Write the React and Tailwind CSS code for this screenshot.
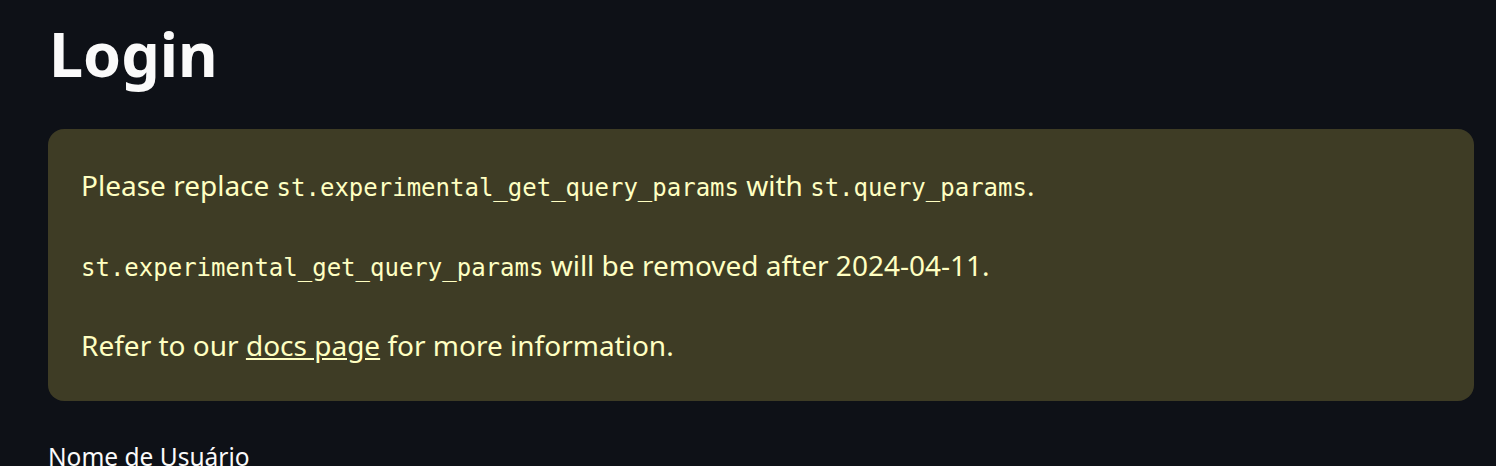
export default function App() {
  const sans = { fontFamily: '"Noto Sans", "Open Sans", sans-serif' };
  const codeCls = "text-[24px] leading-none font-['DejaVu_Sans_Mono',monospace]";
  return (
    <div className="w-[1496px] h-[466px] overflow-hidden bg-[#0e1117] pl-[48px] pr-[22px] pt-[17px]" style={sans}>
      <h1 className="text-[61px] leading-[74px] font-bold text-[#fafafa] mb-[38px] pl-[1px]">Login</h1>
      <div className="rounded-2xl bg-[#3e3c25] px-[33px] py-[32px] text-[#ffffc2] text-[28px] leading-[48px]">
        <p className="mb-[32px]">
          Please replace <code className={codeCls}>st.experimental_get_query_params</code> with{" "}
          <code className={codeCls}>st.query_params</code>.
        </p>
        <p className="mb-[32px]">
          <code className={codeCls}>st.experimental_get_query_params</code> will be removed after 2024-04-11.
        </p>
        <p>
          Refer to our <a className="underline">docs page</a> for more information.
        </p>
      </div>
      <div className="mt-[39px] text-[24.5px] leading-[34px] text-[#fafafa]">Nome de Usuário</div>
    </div>
  );
}
